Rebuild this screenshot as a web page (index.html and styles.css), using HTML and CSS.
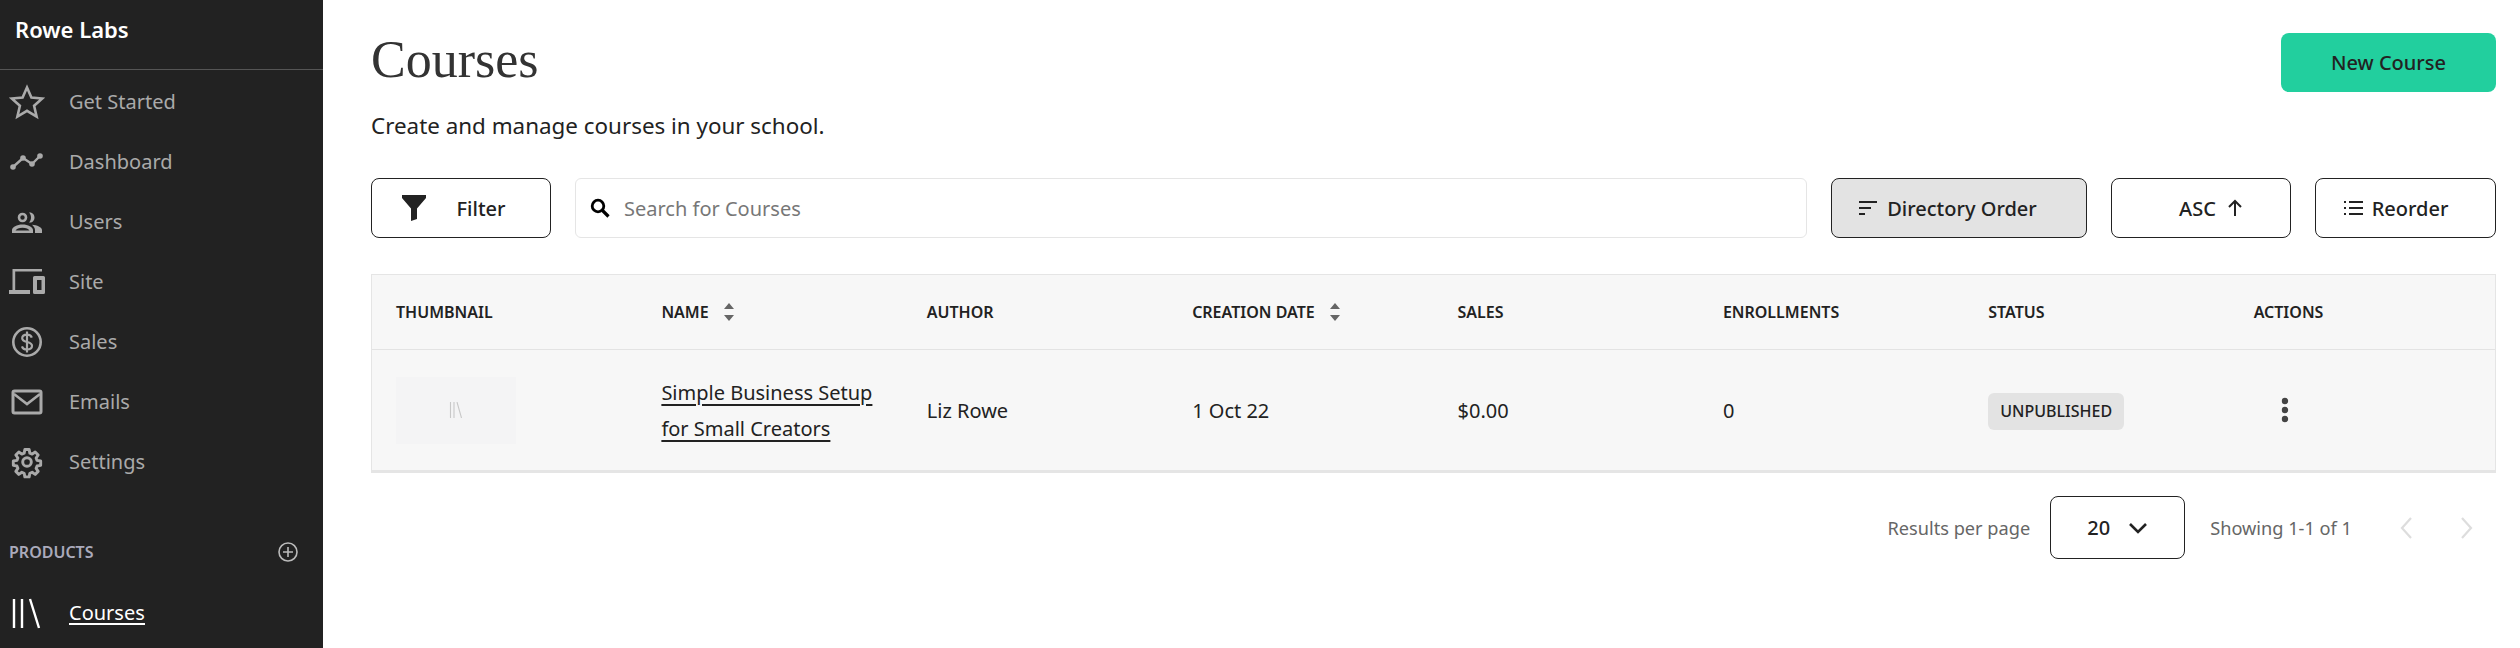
FILE: index.html
```html
<!DOCTYPE html>
<html lang="en">
<head>
<meta charset="utf-8">
<title>Courses</title>
<link rel="stylesheet" href="styles.css">
</head>
<body>
<aside class="sidebar">
  <div class="brand">Rowe Labs</div>
  <nav class="nav">
    <a class="nav-item"><svg class="nav-icon" viewBox="0 0 36 36"><path d="M18 3.500l4.400 10 10.900 1-8.200 7.300 2.500 10.700-9.600-5.700-9.600 5.700 2.500-10.700-8.200-7.300 10.900-1z" fill="none" stroke="currentColor" stroke-width="2.600"/></svg><span>Get Started</span></a>
    <a class="nav-item"><svg class="nav-icon" viewBox="0 0 36 36"><path d="M4 23l10-9 9 6 8-8" fill="none" stroke="currentColor" stroke-width="2.400"/><circle cx="4" cy="23" r="2.800" fill="currentColor"/><circle cx="14" cy="14" r="2.800" fill="currentColor"/><circle cx="23" cy="20" r="2.800" fill="currentColor"/><circle cx="31" cy="12" r="2.800" fill="currentColor"/></svg><span>Dashboard</span></a>
    <a class="nav-item"><svg class="nav-icon" viewBox="0 0 36 36"><circle cx="13.500" cy="13.500" r="3.500" fill="none" stroke="currentColor" stroke-width="2.600"/><path d="M20 8.500c3.400-.5 5.500 2 5.500 5s-2.100 5.500-5.500 5c1.300-1.300 2-3.100 2-5s-.7-3.700-2-5z" fill="currentColor"/><path d="M3 29v-3c0-2.800 5-5.500 10.500-5.500S24 23.200 24 26v3zM6.500 26.400h14c-.8-1.300-3.500-2.700-7-2.700s-6.200 1.400-7 2.700z" fill="currentColor" fill-rule="evenodd"/><path d="M23 20.800c5 .4 10 2.400 10 5.200v3h-7v-3c0-1.800-1.300-3.800-3-5.200z" fill="currentColor"/></svg><span>Users</span></a>
    <a class="nav-item"><svg class="nav-icon" viewBox="0 0 36 36"><path d="M3.500 5H33v2.400H6.200V26H21v4H0v-4h3.500z" fill="currentColor"/><path d="M25.500 12H34.500a1.500 1.500 0 0 1 1.500 1.500v15a1.500 1.500 0 0 1-1.500 1.500H25.500a1.500 1.500 0 0 1-1.500-1.500v-15a1.500 1.500 0 0 1 1.500-1.500zm2.500 4v10h4.500V16z" fill="currentColor" fill-rule="evenodd"/></svg><span>Site</span></a>
    <a class="nav-item"><svg class="nav-icon" viewBox="0 0 36 36"><circle cx="18" cy="18" r="13.700" fill="none" stroke="currentColor" stroke-width="2.600"/><path d="M22.800 13.600c-.5-1.800-2.400-3-4.800-3-2.700 0-4.800 1.400-4.800 3.700 0 5 9.800 2.500 9.800 7.500 0 2.300-2.200 3.700-5 3.700-2.500 0-4.500-1.200-5-3.100M18 7.500v21" fill="none" stroke="currentColor" stroke-width="2.200"/></svg><span>Sales</span></a>
    <a class="nav-item"><svg class="nav-icon" viewBox="0 0 36 36"><rect x="4" y="7" width="28" height="22" rx="1.500" fill="none" stroke="currentColor" stroke-width="3"/><path d="M5 10l13 10 13-10" fill="none" stroke="currentColor" stroke-width="2.600"/></svg><span>Emails</span></a>
    <a class="nav-item"><svg class="nav-icon" viewBox="0 0 36 36"><g transform="translate(18 18) scale(.86) translate(-18 -18)"><path d="M15.500 3.500h5l.8 4.200 2.700 1.100 3.500-2.400 3.500 3.500-2.400 3.500 1.100 2.700 4.200.8v5l-4.200.8-1.100 2.700 2.400 3.500-3.500 3.500-3.500-2.400-2.700 1.100-.8 4.200h-5l-.8-4.200-2.700-1.100-3.500 2.400-3.500-3.500 2.400-3.500-1.100-2.700-4.200-.8v-5l4.200-.8 1.100-2.700-2.400-3.500 3.500-3.500 3.500 2.400 2.700-1.100z" fill="none" stroke="currentColor" stroke-width="3.400" stroke-linejoin="round"/><circle cx="18" cy="18" r="5" fill="none" stroke="currentColor" stroke-width="3.400"/></g></svg><span>Settings</span></a>
  </nav>
  <div class="section-head">
    <span>PRODUCTS</span>
    <svg class="plus" viewBox="0 0 20 20"><circle cx="10" cy="10" r="9" fill="none" stroke="currentColor" stroke-width="1.600"/><path d="M10 5v10M5 10h10" stroke="currentColor" stroke-width="1.600"/></svg>
  </div>
  <a class="nav-item nav-item-active"><svg class="nav-icon" viewBox="0 0 36 36"><path d="M5 3v29M13 3v29M21 3l9 29" fill="none" stroke="currentColor" stroke-width="2.400"/></svg><span class="underlined">Courses</span></a>
</aside>
<main class="main">
  <header class="page-head">
    <div>
      <h1 class="title">Courses</h1>
      <p class="subtitle">Create and manage courses in your school.</p>
    </div>
    <button class="btn-primary">New Course</button>
  </header>
  <div class="toolbar">
    <button class="btn btn-filter"><svg class="icon-filter" viewBox="0 0 26 26"><path d="M1 0h24v3L16 13.500V24l-6 2V13.500L1 3z" fill="#222"/></svg><span>Filter</span></button>
    <label class="search"><svg class="icon-search" viewBox="0 0 20 20"><circle cx="8" cy="8" r="5.800" fill="none" stroke="#000" stroke-width="2.800"/><path d="M12.500 12.500l6 6" stroke="#000" stroke-width="3.200"/></svg><span class="search-ph">Search for Courses</span></label>
    <button class="btn btn-order"><svg class="icon-small" viewBox="0 0 20 20"><path d="M1 4h18M1 10h12M1 16h6" stroke="#222" stroke-width="2"/></svg><span>Directory Order</span></button>
    <button class="btn btn-asc"><span>ASC</span><svg class="icon-small" viewBox="0 0 20 20"><path d="M10 18V3M4 9l6-6 6 6" fill="none" stroke="#222" stroke-width="2"/></svg></button>
    <button class="btn btn-reorder"><svg class="icon-small" viewBox="0 0 20 20"><path d="M6 4h14M6 10h14M6 16h14" stroke="#222" stroke-width="2"/><path d="M1 4h2M1 10h2M1 16h2" stroke="#222" stroke-width="2"/></svg><span>Reorder</span></button>
  </div>
  <section class="table">
    <div class="table-row table-head">
      <div class="th">THUMBNAIL</div>
      <div class="th">NAME<svg class="sort" viewBox="0 0 10 20"><path d="M5 1l5 6H0zM5 19l5-6H0z" fill="#666"/></svg></div>
      <div class="th">AUTHOR</div>
      <div class="th">CREATION DATE<svg class="sort" viewBox="0 0 10 20"><path d="M5 1l5 6H0zM5 19l5-6H0z" fill="#666"/></svg></div>
      <div class="th">SALES</div>
      <div class="th">ENROLLMENTS</div>
      <div class="th">STATUS</div>
      <div class="th">ACTIONS</div>
    </div>
    <div class="table-row table-body">
      <div class="td"><div class="thumb"><svg class="thumb-icon" viewBox="0 0 14 16"><path d="M1.500 0v16M5 0v16M8 0l4.500 16" fill="none" stroke="#c8c8c8" stroke-width="1.100"/></svg></div></div>
      <div class="td"><a class="course-link">Simple Business Setup<br>for Small Creators</a></div>
      <div class="td">Liz Rowe</div>
      <div class="td">1 Oct 22</div>
      <div class="td">$0.00</div>
      <div class="td">0</div>
      <div class="td"><span class="badge">UNPUBLISHED</span></div>
      <div class="td"><svg class="dots" viewBox="0 0 8 26"><circle cx="4" cy="4" r="3.200" fill="#444"/><circle cx="4" cy="13" r="3.200" fill="#444"/><circle cx="4" cy="22" r="3.200" fill="#444"/></svg></div>
    </div>
  </section>
  <footer class="pager">
    <span class="pager-text">Results per page</span>
    <div class="select"><span>20</span><svg class="chev" viewBox="0 0 20 14"><path d="M2 3l8 8 8-8" fill="none" stroke="#222" stroke-width="2.600"/></svg></div>
    <span class="pager-text">Showing 1-1 of 1</span>
    <svg class="page-arrow" viewBox="0 0 14 24"><path d="M12 2L3 12l9 10" fill="none" stroke="#ddd" stroke-width="2.200"/></svg>
    <svg class="page-arrow" viewBox="0 0 14 24"><path d="M2 2l9 10-9 10" fill="none" stroke="#ddd" stroke-width="2.200"/></svg>
  </footer>
</main>
</body>
</html>
```
FILE: styles.css
```css
* { box-sizing: border-box; }
html, body { height: 100%; }
body {
  margin: 0;
  display: flex;
  height: 648px;
  overflow: hidden;
  background: #fff;
  color: #222;
  font-family: "Noto Sans", "Open Sans", sans-serif;
  font-size: 20px;
}
.sidebar {
  width: 323px;
  flex: none;
  background: #222;
  color: #aaa;
}
.brand {
  height: 70px;
  padding: 14px 15px 0;
  border-bottom: 1px solid #555;
  color: #fff;
  font-size: 22px;
  font-weight: 600;
  line-height: 30px;
}
.nav { padding-top: 2px; }
.nav-item {
  display: flex;
  align-items: center;
  height: 60px;
  padding-left: 9px;
  line-height: 30px;
}
.nav-icon { width: 36px; height: 36px; flex: none; margin-right: 24px; }
.section-head {
  display: flex;
  align-items: center;
  justify-content: space-between;
  margin-top: 45px;
  padding: 0 25px 0 9px;
  height: 30px;
  font-size: 16px;
  font-weight: 600;
  color: #aab;
}
.plus { width: 20px; height: 20px; color: #bbb; }
.nav-item-active { color: #fff; margin-top: 17px; }
.underlined { border-bottom: 2px solid #fff; line-height: 20px; }
.main { flex: 1; min-width: 0; padding: 33px 24px 0 48px; }
.page-head { display: flex; justify-content: space-between; align-items: flex-start; height: 145px; }
.title {
  margin: -1px 0 0;
  font-family: "Liberation Serif", serif;
  font-weight: 400;
  font-size: 52px;
  line-height: 56px;
  color: #333;
}
.subtitle { margin: 23px 0 0; font-size: 22.4px; line-height: 30px; }
.btn-primary {
  width: 215px;
  height: 59px;
  border: 0;
  border-radius: 8px;
  background: #22cf9e;
  color: #222;
  font: 500 20px "Noto Sans", sans-serif;
}
.toolbar { display: flex; gap: 24px; height: 60px; }
.btn {
  display: flex;
  align-items: center;
  justify-content: center;
  gap: 8px;
  height: 60px;
  padding: 0;
  border: 1px solid #222;
  border-radius: 8px;
  background: #fff;
  color: #222;
  font: 500 20px "Noto Sans", sans-serif;
}
.btn-filter { width: 180px; gap: 30px; padding-right: 16px; }
.icon-filter { width: 26px; height: 26px; }
.search {
  flex: 1;
  display: flex;
  align-items: center;
  gap: 14px;
  padding-left: 14px;
  border: 1px solid #e5e5e5;
  border-radius: 6px;
  background: #fff;
}
.icon-search { width: 20px; height: 20px; }
.search-ph { color: #777; }
.btn-order { width: 256px; background: #e3e3e3; padding-right: 23px; gap: 9px; }
.btn-asc { width: 180px; padding-left: 22px; gap: 9px; }
.btn-reorder { width: 181px; padding-right: 20px; gap: 9px; }
.icon-small { width: 20px; height: 20px; }
.table { margin-top: 36px; border: 1px solid #e5e5e5; border-bottom-width: 3px; background: #f7f7f7; }
.table-row { display: grid; grid-template-columns: repeat(8, 1fr); align-items: center; }
.table-head { height: 75px; border-bottom: 1px solid #e3e3e3; }
.table-body { height: 120px; padding-top: 2px; }
.th {
  display: flex;
  align-items: center;
  gap: 15px;
  padding-left: 24px;
  font-size: 16px;
  font-weight: 600;
}
.td { padding-left: 24px; line-height: 36px; }
.sort { width: 10px; height: 20px; }
.thumb {
  display: flex;
  align-items: center;
  justify-content: center;
  width: 120px;
  height: 67px;
  margin-top: -2px;
  background: #f4f4f5;
}
.thumb-icon { width: 14px; height: 16px; }
.course-link { text-decoration: underline; text-decoration-thickness: 2px; text-underline-offset: 4px; }
.badge {
  display: inline-block;
  height: 37px;
  padding: 0 12px;
  border-radius: 6px;
  background: #e3e3e3;
  font-size: 16px;
  font-weight: 500;
  line-height: 37px;
}
.dots { display: block; width: 8px; height: 26px; margin-left: 27px; margin-top: -2px; }
.pager { display: flex; align-items: center; justify-content: flex-end; height: 63px; margin-top: 23px; padding-right: 22px; gap: 23px; }
.pager-text { font-size: 18.2px; color: #666; }
.select {
  display: flex;
  align-items: center;
  justify-content: center;
  gap: 18px;
  width: 135px;
  height: 63px;
  margin: 0 2px 0 -3px;
  border: 1px solid #222;
  border-radius: 8px;
  font-weight: 500;
}
.chev { width: 20px; height: 14px; }
.page-arrow { width: 14px; height: 24px; margin-left: 24px; }
```
